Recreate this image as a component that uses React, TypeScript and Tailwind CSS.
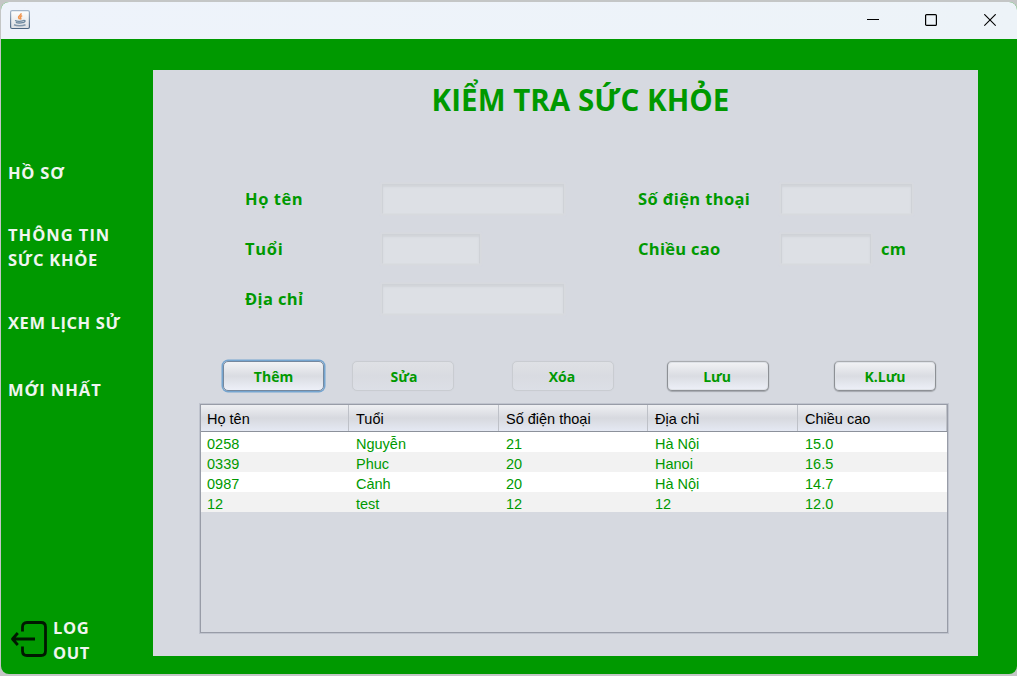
import React from "react";

const columns = ["Họ tên", "Tuổi", "Số điện thoại", "Địa chỉ", "Chiều cao"];
const rows = [
  ["0258", "Nguyễn", "21", "Hà Nội", "15.0"],
  ["0339", "Phuc", "20", "Hanoi", "16.5"],
  ["0987", "Cảnh", "20", "Hà Nội", "14.7"],
  ["12", "test", "12", "12", "12.0"],
];
const tableGrid = "grid grid-cols-[148px_150px_149px_150px_149px]";

function JavaIcon() {
  return (
    <svg width="20" height="20" viewBox="0 0 20 20" fill="none">
      <defs>
        <linearGradient id="tile" x1="0" y1="0" x2="0" y2="1">
          <stop offset="0" stopColor="#ffffff" />
          <stop offset="1" stopColor="#dcdfe3" />
        </linearGradient>
        <linearGradient id="edge" x1="0" y1="0" x2="0" y2="1">
          <stop offset="0" stopColor="#a3b5c9" />
          <stop offset="1" stopColor="#4c6580" />
        </linearGradient>
      </defs>
      <rect x="0.6" y="0.6" width="18.8" height="17.9" rx="1.5" fill="url(#tile)" stroke="url(#edge)" strokeWidth="1.2" />
      <path d="M11 3.2c.8 1.900-3.200 2.700-2.400 4.500.3.700 1 1.100 1.200 1.600M12.200 5.600c-1.600.7-2.300 1.500-1.500 2.400.5.700.1 1.100-.3 1.500" stroke="#f0954f" strokeWidth="1.500" />
      <path d="M5 10.500c2 .8 6.300.8 8.500 0M5.800 12.300c2 .8 5.100.8 7.200 0M13.500 10.300c2.300-.2 2 1.700-.4 2.300" stroke="#6d889f" strokeWidth="1.300" />
      <path d="M4 14.800c2.800 1.300 8.500 1.300 11.500 0" stroke="#8499ac" strokeWidth="1.500" />
    </svg>
  );
}

function LogoutIcon() {
  return (
    <svg width="38" height="38" viewBox="0 0 38 38" fill="none" stroke="#001800" strokeLinecap="butt">
      <path d="M12.500 11.500V7q0-4.500 4.500-4.500h14q4.500 0 4.500 4.500v24q0 4.500-4.500 4.500H17q-4.500 0-4.500-4.500v-4.500" strokeWidth="2.800" />
      <path d="M25 19H2.500M7.800 13l-5.300 6 5.300 6" strokeWidth="2.800" strokeLinejoin="round" />
    </svg>
  );
}

function TitleBar() {
  return (
    <header className="flex h-[37px] shrink-0 items-start justify-between bg-linear-to-r from-[#eef3fb] to-[#edf3f8] pl-[9px]">
      <div className="pt-2">
        <JavaIcon />
      </div>
      <div className="flex pt-3 pr-[21px]">
        <button aria-label="Minimize" className="mr-[46px]">
          <svg className="block" width="12" height="13" viewBox="0 0 12 13"><path d="M0 5.500h12" stroke="#000" /></svg>
        </button>
        <button aria-label="Maximize" className="mr-[47px]">
          <svg className="block" width="12" height="13" viewBox="0 0 12 13" fill="none"><rect x="0.600" y="0.600" width="10.800" height="10.800" rx="1" stroke="#000" strokeWidth="1.200" /></svg>
        </button>
        <button aria-label="Close">
          <svg className="block" width="12" height="13" viewBox="0 0 12 13"><path d="M.3.300l11.400 11.400M11.700.300L.3 11.700" stroke="#000" strokeWidth="1.200" /></svg>
        </button>
      </div>
    </header>
  );
}

function Sidebar() {
  return (
    <nav className="flex w-[152px] shrink-0 flex-col pl-[7px] text-[16.500px] leading-[25px] font-bold whitespace-nowrap text-[#f0f5f0]">
      <a className="mt-[121px] tracking-[0.750px]">HỒ SƠ</a>
      <a className="mt-[37px] tracking-[0.980px]">
        <span className="block">THÔNG TIN</span>
        <span className="block tracking-[0.700px]">SỨC KHỎE</span>
      </a>
      <a className="mt-[38px] tracking-[0.600px]">XEM LỊCH SỬ</a>
      <a className="mt-[42px] tracking-[0.980px]">MỚI NHẤT</a>
      <a className="mt-auto mb-[9px] flex items-center gap-[5px] tracking-[0.600px]">
        <span className="-mt-[2px] ml-[2px]"><LogoutIcon /></span>
        <span>
          <span className="block">LOG</span>
          <span className="block">OUT</span>
        </span>
      </a>
    </nav>
  );
}

function Field({ label, className }: { label: string; className: string }) {
  return (
    <input
      aria-label={label}
      disabled
      className={`h-[30px] border-x border-t border-[#cfd2d7] border-b border-b-[#dadde1] bg-[#dde0e5] shadow-[inset_0_2px_2px_#d1d4d9,0_0_2px_1px_#d8dade] ${className}`}
    />
  );
}

function Form() {
  return (
    <form className="mt-[63px] grid grid-cols-[137px_256px_143px_100px_1fr] grid-rows-[repeat(3,50px)] items-start pl-[92px] text-[16.500px] leading-[30px] font-bold tracking-[0.370px] whitespace-nowrap">
      <label className="tracking-[0.550px]">Họ tên</label>
      <Field label="Họ tên" className="w-[182px]" />
      <label>Số điện thoại</label>
      <Field label="Số điện thoại" className="col-span-2 w-[131px]" />
      <label className="tracking-[0.700px]">Tuổi</label>
      <Field label="Tuổi" className="w-[98px]" />
      <label className="tracking-[0.300px]">Chiều cao</label>
      <Field label="Chiều cao" className="w-[90px]" />
      <span>cm</span>
      <label>Địa chỉ</label>
      <Field label="Địa chỉ" className="w-[182px]" />
    </form>
  );
}

const enabled =
  "border-[#8d9095] border-t-[#a9acb0] bg-linear-to-b from-[#f2f3f5] via-[#dadce2] to-[#edf0f8] shadow-[0_1px_1px_#a5a8ae,0_0_1px_#9c9fa5,inset_0_0_0_1px_#dfe2e7]";
const focused =
  "border-[#75889e] bg-linear-to-b from-[#f2f3f5] via-[#dadce2] to-[#edf0f8] shadow-[0_0_0_1.500px_#75a5d0]";
const disabled =
  "border-[#c9ccd1] bg-linear-to-b from-[#dfe1e5] via-[#d9dbe1] to-[#dcdfe6] shadow-[0_0_1px_#c9ccd1]";

function Button({ text, className }: { text: string; className: string }) {
  return (
    <button className={`flex h-[30px] items-center justify-center rounded-[5px] border text-[14px] font-bold ${className}`}>
      {text}
    </button>
  );
}

function RecordsTable() {
  return (
    <section className="mt-[13px] ml-[47px] h-[229px] w-[748px] border border-[#989ca7] text-[14.500px] shadow-[0_0_0_1px_#c0c4ce]" style={{ fontFamily: '"Liberation Sans", Arial, sans-serif' }}>
      <div className={`${tableGrid} h-[27px] overflow-hidden border-b border-[#8c919b] bg-linear-to-b from-[#eff0f3] via-[#d7d9df] to-[#e5e9f3] text-black`}>
        {columns.map((name) => (
          <span key={name} className="border-r border-[#bec1c8] pl-[7px] leading-[28px] first:pl-[6px]">{name}</span>
        ))}
      </div>
      {rows.map((row, r) => (
        <div key={r} className={`${tableGrid} h-5 ${r % 2 ? "bg-[#f2f2f2]" : "bg-white"}`}>
          {row.map((cell, c) => (
            <span key={c} className="pl-[7px] leading-[24px] first:pl-[6px]">{cell}</span>
          ))}
        </div>
      ))}
    </section>
  );
}

export default function App() {
  return (
    <div className="h-[676px] w-[1017px] overflow-hidden bg-[#c4c6c6] pt-[2px] pl-px" style={{ fontFamily: '"Open Sans", "Noto Sans", sans-serif' }}>
      <div className="flex h-[672px] flex-col overflow-hidden rounded-lg bg-[#009900]">
        <TitleBar />
        <div className="flex min-h-0 flex-1">
          <Sidebar />
          <main className="mt-[31px] h-[586px] w-[825px] bg-[#d6d9e0] text-[#009900]">
            <h1 className="mt-[9px] pl-[30px] text-center text-[29.500px] leading-[42px] font-bold tracking-[0.050px]">KIỂM TRA SỨC KHỎE</h1>
            <Form />
            <div className="mt-[27px] flex pl-[70px]">
              <Button text="Thêm" className={`mr-[28px] w-[101px] ${focused}`} />
              <Button text="Sửa" className={`mr-[58px] w-[102px] pl-[2px] ${disabled}`} />
              <Button text="Xóa" className={`mr-[53px] w-[102px] pr-[2px] ${disabled}`} />
              <Button text="Lưu" className={`mr-[65px] w-[102px] pr-[2px] ${enabled}`} />
              <Button text="K.Lưu" className={`w-[102px] ${enabled}`} />
            </div>
            <RecordsTable />
          </main>
        </div>
      </div>
    </div>
  );
}
